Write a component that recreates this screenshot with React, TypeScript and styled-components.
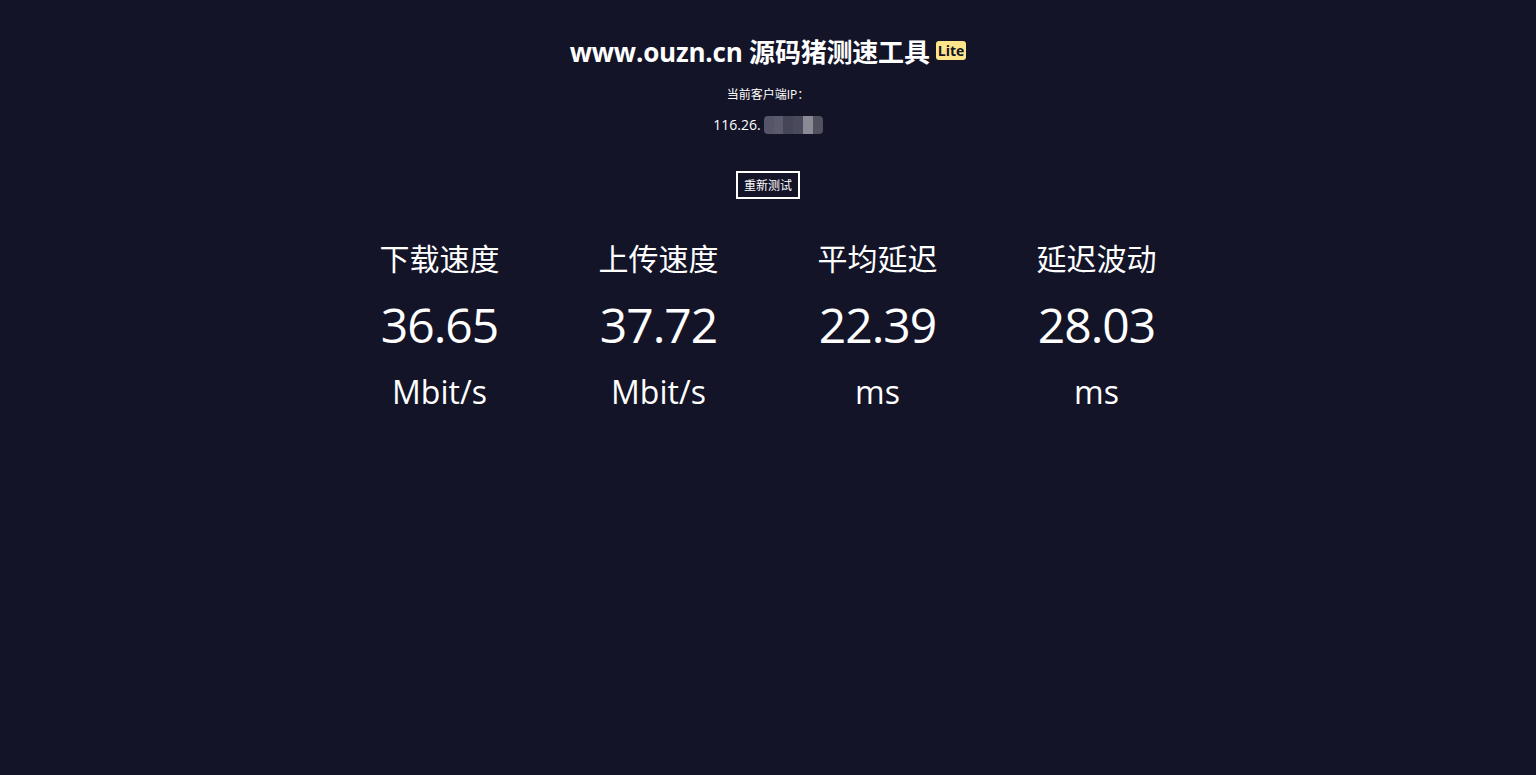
import React from 'react';
import styled, { createGlobalStyle } from 'styled-components';

const GlobalStyle = createGlobalStyle`
  html, body {
    margin: 0;
    padding: 0;
    background: #141428;
  }
  body {
    color: #fff;
    font-family: 'Open Sans', 'Noto Sans CJK SC', sans-serif;
  }
`;

const Page = styled.div`
  min-height: 775px;
  background: #141428;
  display: flex;
  flex-direction: column;
  align-items: center;
  padding-top: 36px;
  box-sizing: border-box;
`;

const Title = styled.h1`
  margin: 0;
  font-size: 26px;
  line-height: 32px;
  font-weight: 700;
  display: flex;
  align-items: center;
  gap: 6px;
  letter-spacing: -0.2px;
  font-family: 'Open Sans', 'Noto Sans CJK SC', sans-serif;
`;

const Badge = styled.span`
  background: #fde68a;
  color: #141428;
  font-size: 14px;
  line-height: 19px;
  padding: 0 2px;
  border-radius: 3px;
  font-weight: 700;
  letter-spacing: 0;
  margin-top: -4px;
`;

const IpLabel = styled.div`
  margin-top: 19px;
  font-size: 12px;
  line-height: 16px;
`;

const IpRow = styled.div`
  margin-top: 12px;
  font-size: 14px;
  line-height: 20px;
  display: flex;
  align-items: center;
`;

const Mosaic = styled.span`
  display: inline-flex;
  height: 18px;
  width: 59px;
  border-radius: 4px;
  overflow: hidden;
  margin-left: 3px;
`;

const Tile = styled.span<{ $c: string }>`
  flex: 1;
  background: ${p => p.$c};
`;

const RetestButton = styled.button`
  margin-top: 36px;
  background: transparent;
  color: #fff;
  border: 2px solid #fff;
  font-size: 12px;
  line-height: 22px;
  padding: 1px 6px;
  font-family: 'Noto Sans CJK SC', sans-serif;
  cursor: pointer;
`;

const Stats = styled.div`
  margin-top: 36px;
  display: grid;
  grid-template-columns: repeat(4, 219px);
`;

const Stat = styled.div`
  display: flex;
  flex-direction: column;
  align-items: center;
`;

const StatLabel = styled.div`
  font-size: 30px;
  line-height: 44px;
  font-family: 'Noto Sans CJK SC', sans-serif;
`;

const StatValue = styled.div`
  margin-top: 18px;
  font-size: 48px;
  line-height: 56px;
  letter-spacing: -1px;
`;

const StatUnit = styled.div`
  margin-top: 18px;
  font-size: 32px;
  line-height: 42px;
`;

const tiles = ['#55556a', '#5a5a6c', '#454558', '#4a4a5c', '#8a8a96', '#50505e'];

const stats = [
  { label: '下载速度', value: '36.65', unit: 'Mbit/s' },
  { label: '上传速度', value: '37.72', unit: 'Mbit/s' },
  { label: '平均延迟', value: '22.39', unit: 'ms' },
  { label: '延迟波动', value: '28.03', unit: 'ms' },
];

export default function App() {
  return (
    <>
      <GlobalStyle />
      <Page>
        <Title>
          www.ouzn.cn 源码猪测速工具<Badge>Lite</Badge>
        </Title>
        <IpLabel>当前客户端IP：</IpLabel>
        <IpRow>
          116.26.
          <Mosaic>
            {tiles.map((c, i) => (
              <Tile key={i} $c={c} />
            ))}
          </Mosaic>
        </IpRow>
        <RetestButton>重新测试</RetestButton>
        <Stats>
          {stats.map(s => (
            <Stat key={s.label}>
              <StatLabel>{s.label}</StatLabel>
              <StatValue>{s.value}</StatValue>
              <StatUnit>{s.unit}</StatUnit>
            </Stat>
          ))}
        </Stats>
      </Page>
    </>
  );
}
